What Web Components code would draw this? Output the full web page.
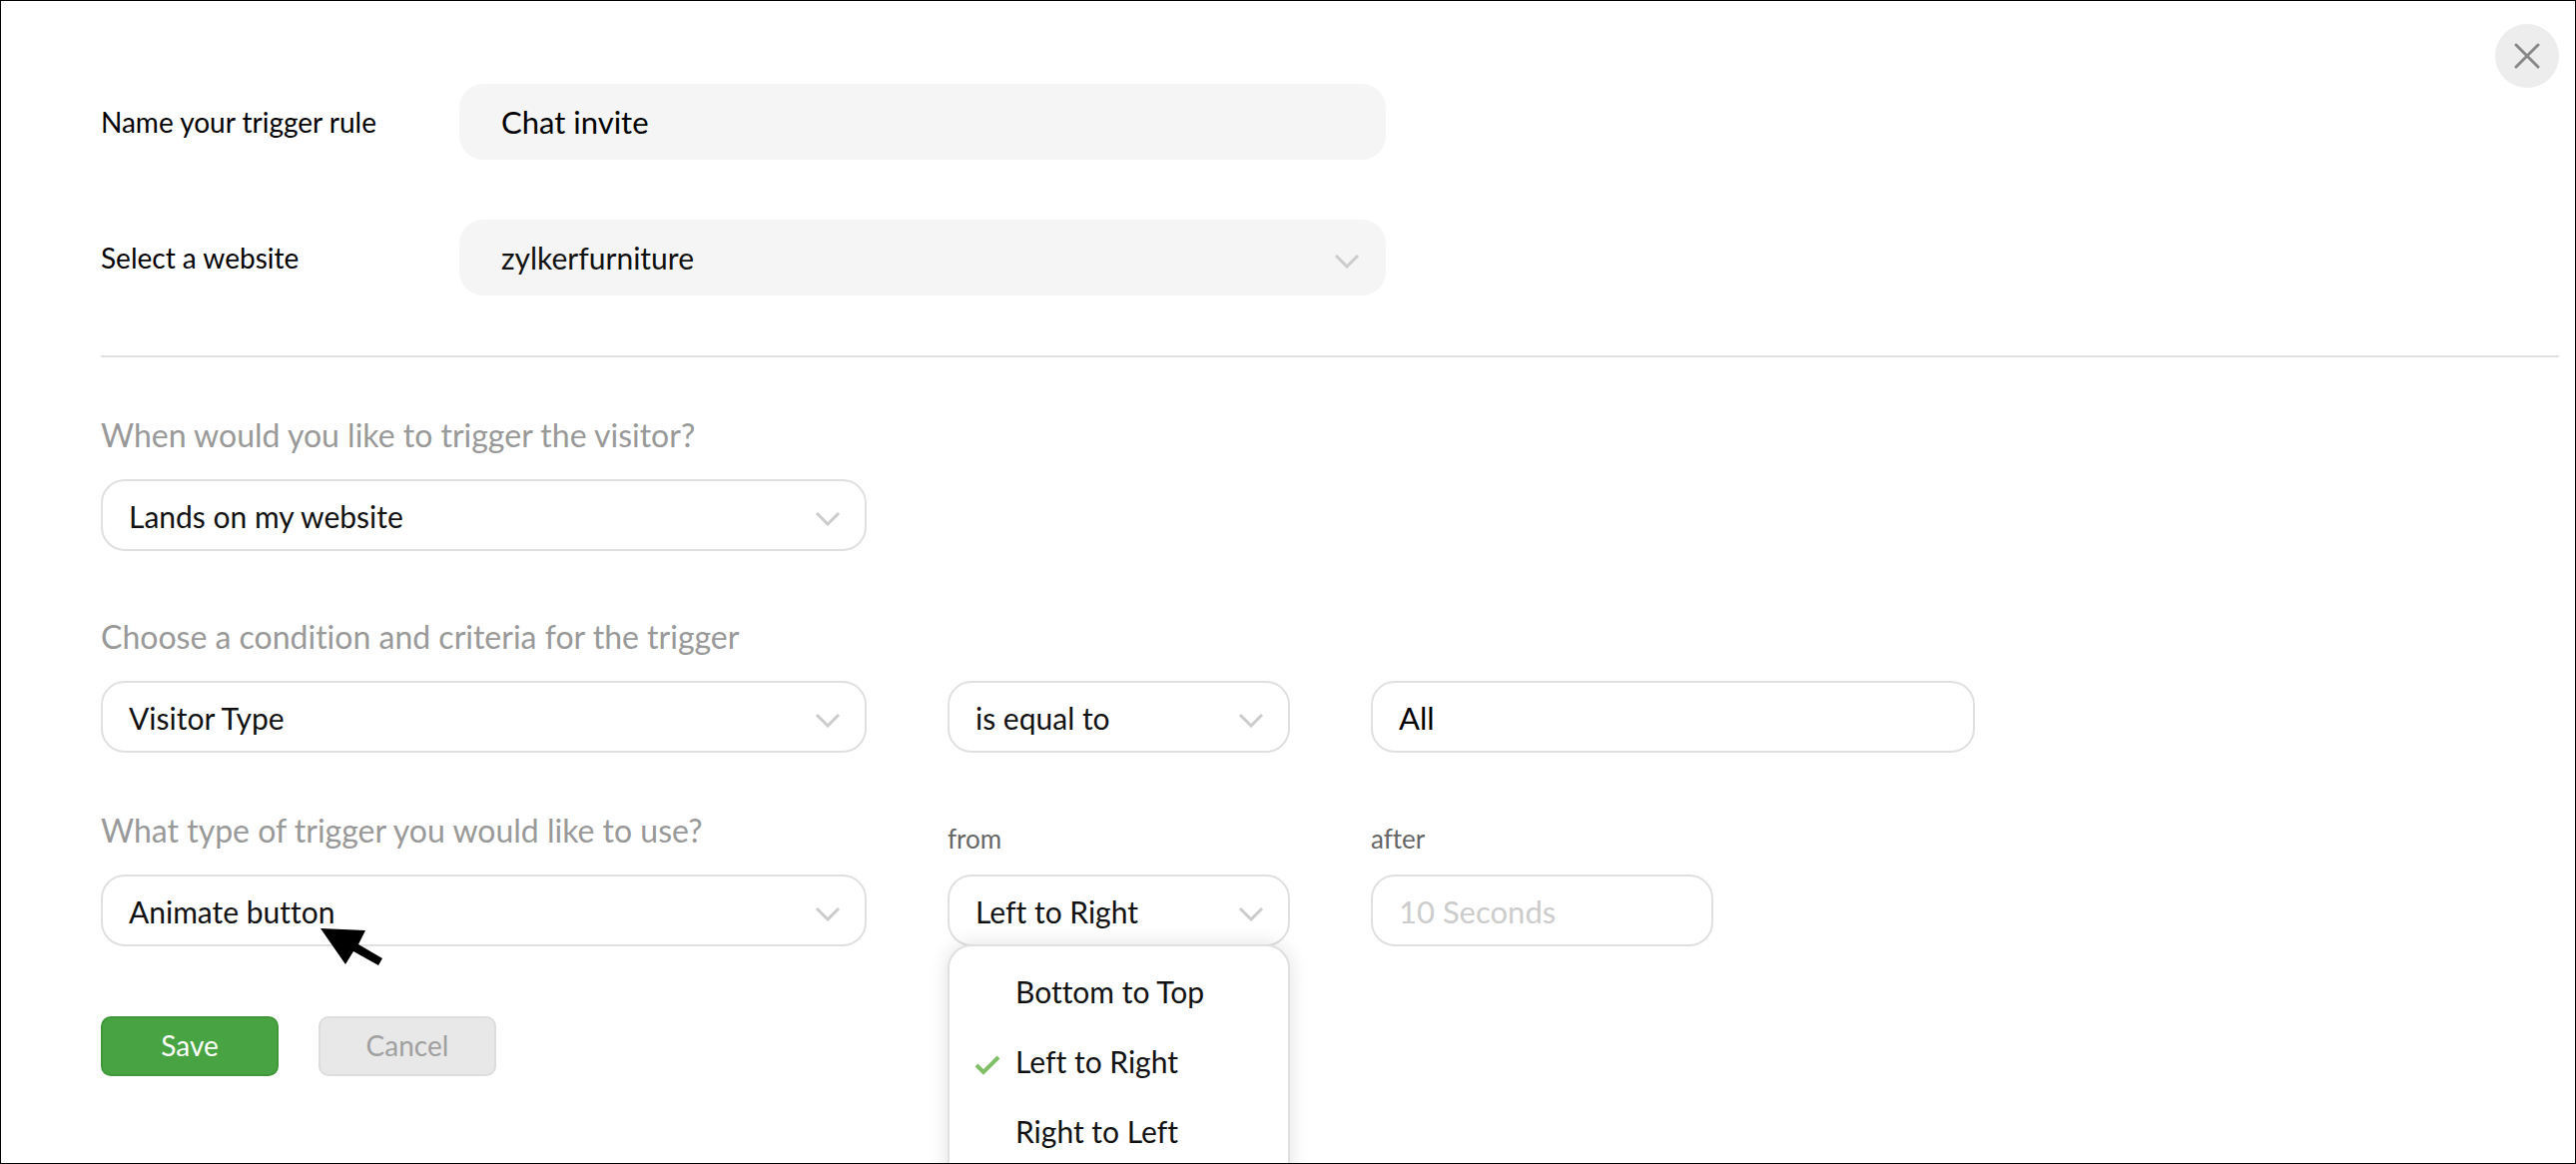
<!DOCTYPE html>
<html lang="en">
<head>
  <meta charset="utf-8">
  <title>Trigger rule</title>
  <style>
    body {
      margin: 0;
      background: #fff;
      color: #111;
      font-family: Lato, "Open Sans", sans-serif;
      font-size: 30px;
      font-variant-ligatures: none;
    }
  </style>
</head>
<body>
  <trigger-panel>
    <text-field slot="basics" variant="filled" value="Chat invite">Name your trigger rule</text-field>
    <select-field slot="basics" variant="filled" options="zylkerfurniture">Select a website</select-field>
    <close-button slot="close"></close-button>

    <rule-row>
      <select-field options="Lands on my website">When would you like to trigger the visitor?</select-field>
    </rule-row>
    <rule-row>
      <select-field options="Visitor Type">Choose a condition and criteria for the trigger</select-field>
      <select-field options="is equal to" name="Operator"></select-field>
      <text-field class="wide" value="All" name="Criteria"></text-field>
    </rule-row>
    <rule-row>
      <select-field options="Animate button">What type of trigger you would like to use?
        <mouse-pointer slot="over"></mouse-pointer>
      </select-field>
      <select-field small options="Left to Right|Bottom to Top|Right to Left">from
        <option-menu slot="over" options="Bottom to Top|Left to Right|Right to Left" selected="Left to Right"></option-menu>
      </select-field>
      <text-field small placeholder="10 Seconds">after</text-field>
    </rule-row>

    <action-button slot="actions" kind="primary">Save</action-button>
    <action-button slot="actions">Cancel</action-button>
  </trigger-panel>

  <script>
    // Styles shared by the text and select fields
    const fieldStyles = `
      :host {
        display: block;
        min-width: 0;
      }
      .field {
        display: flex;
        flex-direction: column;
      }
      label {
        padding-bottom: 26px;
        color: #999;
        font-size: 32px;
        line-height: 36px;
        white-space: nowrap;
      }
      :host([small]) label {
        padding-bottom: 18px;
        color: #666;
        font-size: 26px;
      }
      .box {
        display: grid;
        align-items: center;
        position: relative;
      }
      input, select {
        grid-area: 1 / 1;
        box-sizing: border-box;
        width: 100%;
        height: 72px;
        margin: 0;
        padding: 2px 26px 0;
        border: 2px solid #e0e0e0;
        border-radius: 24px;
        outline: none;
        appearance: none;
        background: #fff;
        color: #111;
        font-family: inherit;
        font-size: 30px;
        font-variant-ligatures: none;
      }
      input {
        color: #000;
        font-size: 31px;
      }
      input::placeholder {
        color: #ccc;
        opacity: 1;
      }

      /* filled fields keep their label on the left */
      :host([variant="filled"]) .field {
        display: grid;
        grid-template-columns: 359fr 928fr 1111fr;
        align-items: center;
      }
      :host([variant="filled"]) label {
        padding: 0;
        color: #000;
        font-size: 28px;
      }
      :host([variant="filled"]) input,
      :host([variant="filled"]) select {
        height: 76px;
        padding: 0 42px;
        border: 0;
        background: #f5f5f5;
      }
    `;

    class TextField extends HTMLElement {
      constructor() {
        super();
        this.attachShadow({ mode: 'open' });
      }

      connectedCallback() {
        const name = this.getAttribute('name');
        this.shadowRoot.innerHTML = `
          <style>${fieldStyles}</style>
          <div class="field">
            ${name ? '' : '<label for="control"><slot></slot></label>'}
            <div class="box">
              <input id="control" type="text"
                value="${this.getAttribute('value') || ''}"
                placeholder="${this.getAttribute('placeholder') || ''}"
                ${name ? `aria-label="${name}"` : ''}>
            </div>
          </div>
        `;
      }
    }
    customElements.define('text-field', TextField);

    class SelectField extends HTMLElement {
      constructor() {
        super();
        this.attachShadow({ mode: 'open' });
      }

      // The first entry of "options" is the one that is chosen
      connectedCallback() {
        const name = this.getAttribute('name');
        const options = this.getAttribute('options').split('|');
        this.shadowRoot.innerHTML = `
          <style>
            ${fieldStyles}
            svg {
              grid-area: 1 / 1;
              justify-self: end;
              width: 26px;
              height: 22px;
              margin-right: 26px;
              fill: none;
              stroke: #ccc;
              stroke-width: 3;
              pointer-events: none;
            }
          </style>
          <div class="field">
            ${name ? '' : '<label for="control"><slot></slot></label>'}
            <div class="box">
              <select id="control" ${name ? `aria-label="${name}"` : ''}>
                ${options.map((text) => `<option>${text}</option>`).join('')}
              </select>
              <svg viewBox="0 0 26 22" aria-hidden="true"><path d="M2 9L13 20L24 9"/></svg>
              <slot name="over"></slot>
            </div>
          </div>
        `;
      }
    }
    customElements.define('select-field', SelectField);

    // Open list that hangs below a select field
    class OptionMenu extends HTMLElement {
      constructor() {
        super();
        this.attachShadow({ mode: 'open' });
      }

      connectedCallback() {
        const selected = this.getAttribute('selected');
        const items = this.getAttribute('options').split('|').map((text) => `
          <li role="option" aria-selected="${text === selected}">
            <svg viewBox="0 0 24 24" aria-hidden="true"><path d="M1 16L8 23L23 8"/></svg>
            <span>${text}</span>
          </li>
        `);
        this.shadowRoot.innerHTML = `
          <style>
            :host {
              display: block;
              position: absolute;
              z-index: 1;
              top: 70px;
              left: 0;
              right: 0;
              color: #111;
              font-size: 30px;
            }
            ul {
              margin: 0;
              padding: 10px 26px 60px;
              border: 2px solid #e0e0e0;
              border-radius: 24px;
              background: #fff;
              box-shadow: 0 0 20px rgba(0, 0, 0, 0.12);
              list-style: none;
            }
            li {
              display: flex;
              align-items: center;
              gap: 16px;
              height: 70px;
            }
            svg {
              width: 24px;
              height: 24px;
              overflow: visible;
              fill: none;
              stroke: #7fbf65;
              stroke-width: 4;
              visibility: hidden;
            }
            li[aria-selected="true"] svg {
              visibility: visible;
            }
          </style>
          <ul role="listbox">${items.join('')}</ul>
        `;
      }
    }
    customElements.define('option-menu', OptionMenu);

    class MousePointer extends HTMLElement {
      constructor() {
        super();
        this.attachShadow({ mode: 'open' }).innerHTML = `
          <style>
            :host {
              display: block;
              position: absolute;
              top: 54px;
              left: 220px;
              pointer-events: none;
            }
            svg {
              display: block;
              width: 62px;
              height: 38px;
            }
          </style>
          <svg viewBox="0 0 62 38" aria-hidden="true">
            <path d="M0 0L45 2L38 16L62 30L58 37L33 23L25 36Z"/>
          </svg>
        `;
      }
    }
    customElements.define('mouse-pointer', MousePointer);

    class CloseButton extends HTMLElement {
      constructor() {
        super();
        this.attachShadow({ mode: 'open' }).innerHTML = `
          <style>
            :host {
              display: block;
            }
            button {
              display: grid;
              place-items: center;
              width: 64px;
              height: 64px;
              padding: 0;
              border: 0;
              border-radius: 50%;
              background: #ededed;
            }
            svg {
              width: 26px;
              height: 26px;
              stroke: #888;
              stroke-width: 3;
              stroke-linecap: round;
            }
          </style>
          <button type="button" aria-label="Close">
            <svg viewBox="0 0 26 26"><path d="M2 2L24 24M24 2L2 24"/></svg>
          </button>
        `;
      }
    }
    customElements.define('close-button', CloseButton);

    class ActionButton extends HTMLElement {
      constructor() {
        super();
        this.attachShadow({ mode: 'open' }).innerHTML = `
          <style>
            :host {
              display: block;
            }
            button {
              box-sizing: border-box;
              width: 178px;
              height: 60px;
              padding: 0 0 2px;
              border: 2px solid #ddd;
              border-radius: 10px;
              background: #e8e8e8;
              color: #a0a0a0;
              font-family: inherit;
              font-size: 28px;
            }
            :host([kind="primary"]) button {
              border-color: #3f973a;
              background: #48a442;
              color: #fff;
            }
          </style>
          <button type="button"><slot></slot></button>
        `;
      }
    }
    customElements.define('action-button', ActionButton);

    // One line of the rule; columns stay aligned between rows
    class RuleRow extends HTMLElement {
      constructor() {
        super();
        this.attachShadow({ mode: 'open' }).innerHTML = `
          <style>
            :host {
              display: grid;
              grid-template-columns: 767fr 343fr 343fr 181fr 504fr;
              column-gap: 81px;
              align-items: end;
            }
            ::slotted(.wide) {
              grid-column: span 2;
            }
          </style>
          <slot></slot>
        `;
      }
    }
    customElements.define('rule-row', RuleRow);

    class TriggerPanel extends HTMLElement {
      constructor() {
        super();
        this.attachShadow({ mode: 'open' }).innerHTML = `
          <style>
            :host {
              display: block;
              box-sizing: border-box;
              min-height: 100vh;
              padding: 23px 16px 87px 100px;
              border: 1px solid #000;
              overflow: hidden;
            }
            header {
              display: flex;
              align-items: flex-start;
              padding-bottom: 60px;
              border-bottom: 2px solid #e0e0e0;
            }
            .basics {
              display: grid;
              flex: 1;
              gap: 60px;
              padding-top: 60px;
            }
            .rules {
              display: grid;
              gap: 60px;
              padding: 60px 0 70px;
            }
            .rules ::slotted(rule-row:first-of-type) {
              padding-bottom: 8px;
            }
            .actions {
              display: flex;
              gap: 40px;
            }
          </style>
          <header>
            <div class="basics"><slot name="basics"></slot></div>
            <slot name="close"></slot>
          </header>
          <div class="rules"><slot></slot></div>
          <div class="actions"><slot name="actions"></slot></div>
        `;
      }
    }
    customElements.define('trigger-panel', TriggerPanel);
  </script>
</body>
</html>
